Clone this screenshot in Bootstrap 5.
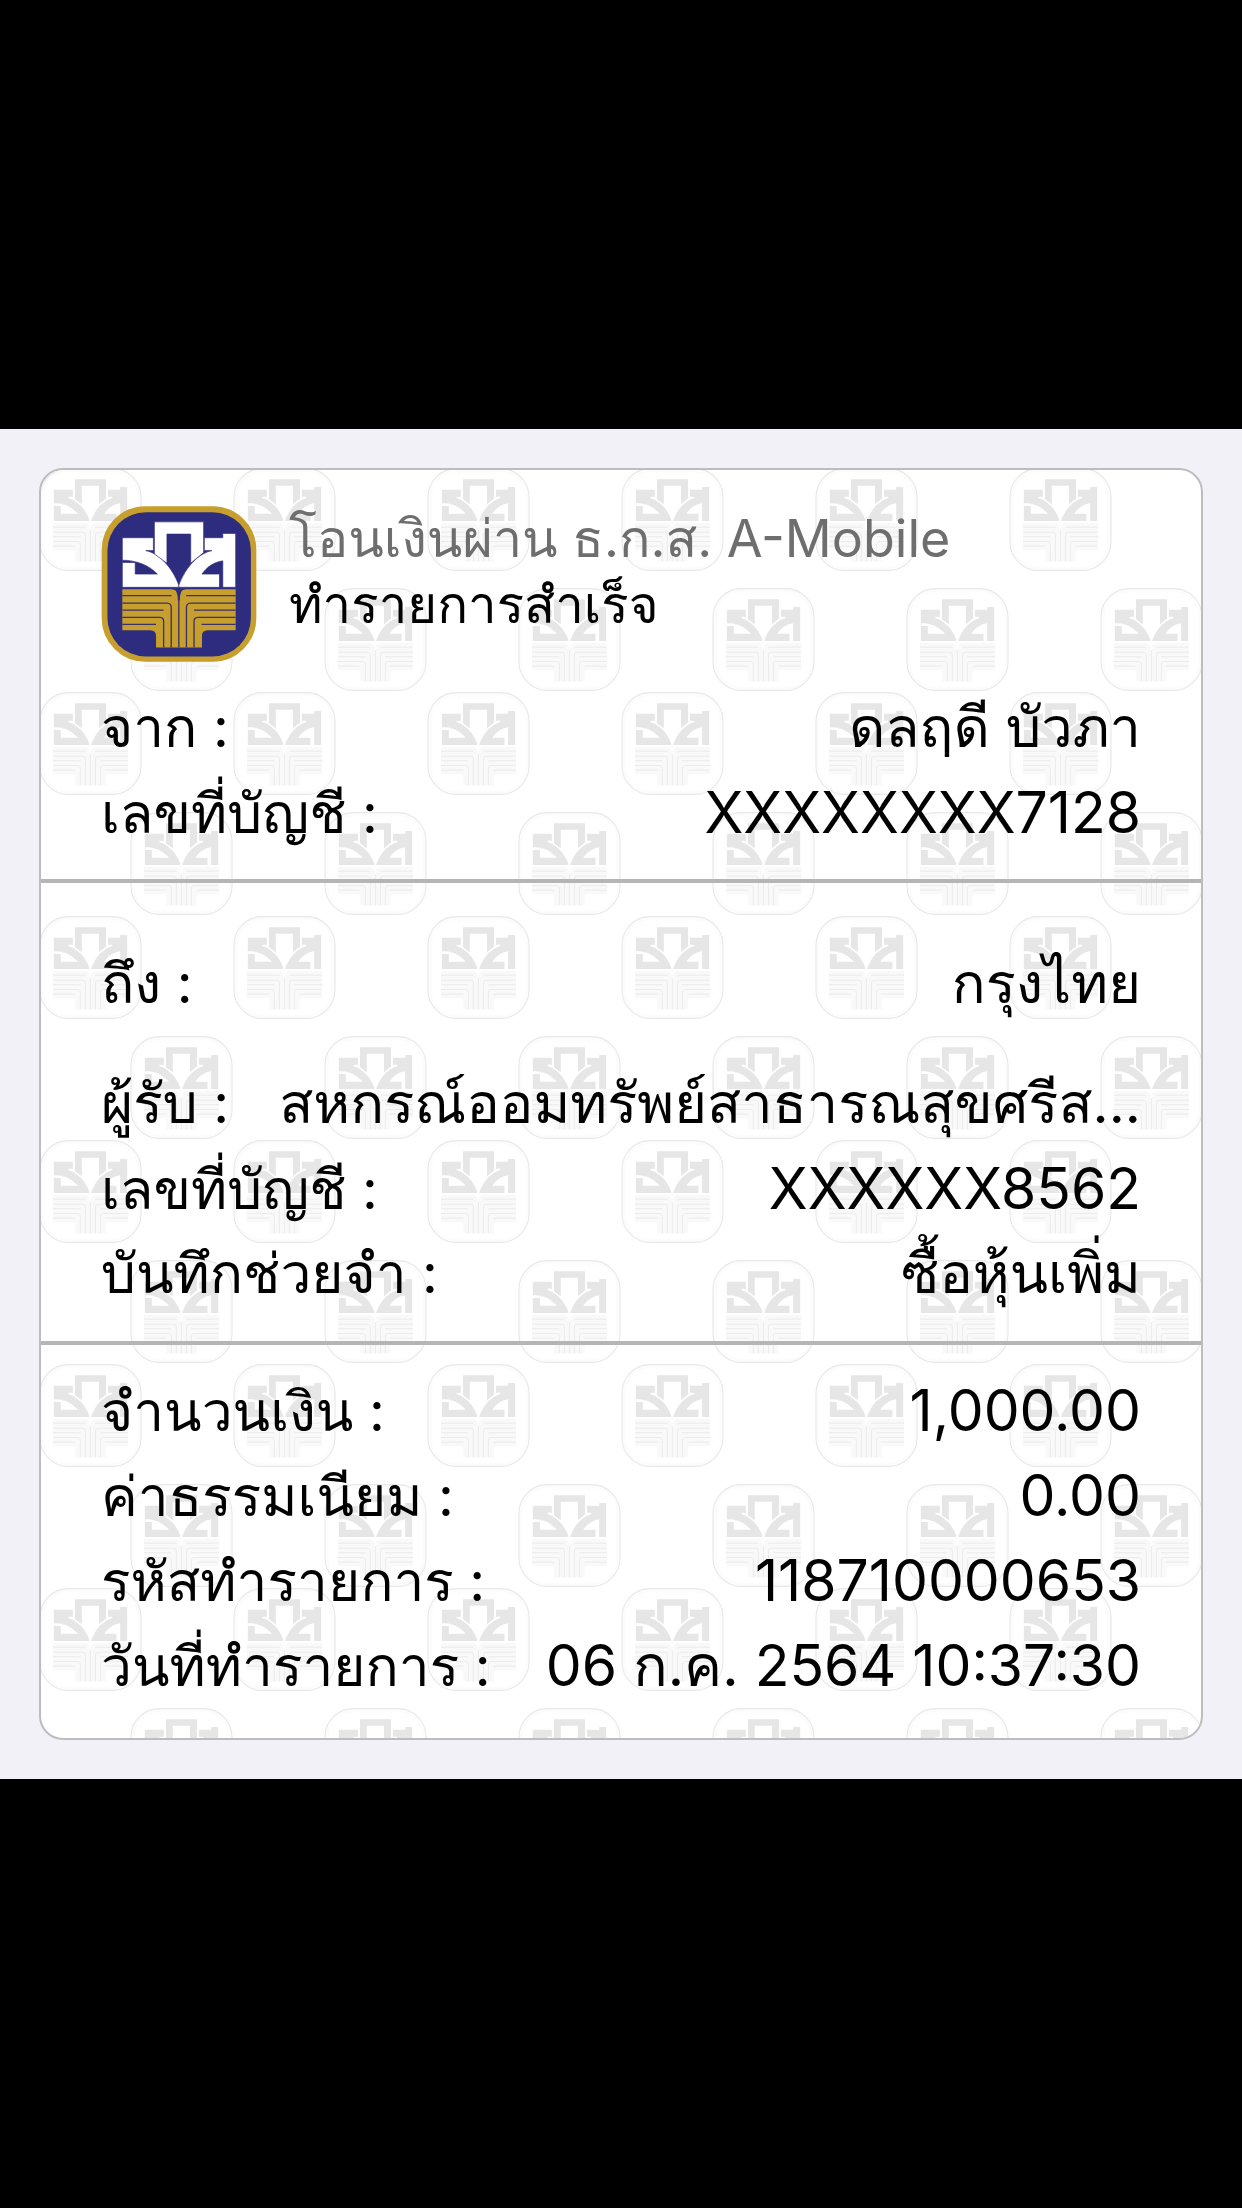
<!DOCTYPE html>
<html lang="th">
<head>
<meta charset="utf-8">
<meta name="viewport" content="width=device-width, initial-scale=1">
<title>โอนเงินผ่าน ธ.ก.ส. A-Mobile</title>
<link rel="stylesheet" href="https://cdn.jsdelivr.net/npm/bootstrap@5.3.0/dist/css/bootstrap.min.css">
<script src="https://cdn.jsdelivr.net/npm/bootstrap@5.3.0/dist/js/bootstrap.bundle.min.js"></script>
<style>
  body { background: #000; color: #000; font-family: Inter, Loma, sans-serif; }
  .slip-band { background: #f2f1f8; padding: 39px; }
  .slip { border: 2px solid #bdbdc0; border-radius: 24px; background: #fff; color: #000; }
  .slip-watermark {
    --field: #fff; --glyph: #e6e6e6; --bars: #f9f9f9; --lines: #e9e9e9; --ring: #fcfcfc; --edge: #e8e8e8; --gap: 7px;
  }
  .slip-logo {
    --field: #2e2c7e; --glyph: #fff; --bars: #c79f2e; --lines: #3b3163; --ring: #c79f2e; --edge: #c79f2e; --gap: 2px;
    width: 156px; height: 156px;
  }
  .slip-head { padding: 36px 60px 23px; gap: 32px; }
  .slip-title { font-size: 52px; line-height: 66px; color: #6e6e6e; }
  .slip-status { font-size: 51px; line-height: 66px; }
  .slip-part { padding: 0 60px 24px; }
  .slip-part + .slip-part { border-top: 4px solid #b5b5b5; }
  .slip-to { padding-top: 58px; padding-bottom: 25px; }
  .slip-sum { padding-top: 23px; padding-bottom: 30px; }
  .slip-row { height: 85px; line-height: 85px; gap: 40px; }
  .slip-row dt { font-size: 55px; font-weight: 400; }
  .slip-row dd { font-size: 57px; }
  .slip-row .thai-value { font-size: 56px; }
  .slip-bank { margin-bottom: 35px; }
</style>
</head>
<body class="d-flex flex-column justify-content-center min-vh-100">
<svg class="d-none" aria-hidden="true">
  <symbol id="baac" viewBox="31 45 469 472">
    <rect x="34" y="48" width="463" height="466" rx="130" style="fill:var(--ring);stroke:var(--edge)" stroke-width="5"/>
    <rect x="49" y="64" width="434" height="436" rx="116" style="fill:var(--field)"/>
    <g style="fill:var(--glyph);stroke:var(--field);stroke-width:var(--gap)">
      <path d="M94 141H188V180H165C205 188 245 230 265 285V291H94V216H133V251H200C175 224 135 209 94 209Z"/>
      <path d="M342 141H398V128H437V291H398V211C370 215 350 230 335 251H388V291H265V285C285 230 325 188 365 180H342Z"/>
      <path d="M191 93H340V186L301 218V130H229V218L191 190Z"/>
    </g>
    <path style="fill:var(--bars)" d="M94 297H243Q259 298 265 311Q271 298 287 297H437V421H352Q335 422 335 438V473H196V438Q196 422 179 421H94Z"/>
    <g fill="none" stroke-width="4" style="stroke:var(--lines)">
      <path d="M94 316H243M94 339H230Q242 340 242 352V473M94 360H219M94 382H208Q219 383 219 394V473M94 403H196"/>
      <path d="M437 316H287M437 339H300Q288 340 288 352V473M437 360H311M437 382H322Q311 383 311 394V473M437 403H334"/>
      <path d="M265 306V473"/>
    </g>
    <path style="fill:var(--field)" d="M249 297Q262 300 262 330H268Q268 300 281 297Z"/>
  </symbol>
</svg>

<main class="slip-band">
  <article class="slip position-relative overflow-hidden">
    <svg class="slip-watermark position-absolute top-0 start-0 w-100 h-100" aria-hidden="true">
      <defs>
        <pattern id="marks" patternUnits="userSpaceOnUse" x="-2" y="-2" width="194" height="224">
          <use href="#baac" x="0" y="0" width="103" height="103"/>
          <use href="#baac" x="91" y="120" width="103" height="103"/>
        </pattern>
      </defs>
      <rect width="100%" height="100%" fill="url(#marks)"/>
    </svg>
    <div class="position-relative">
      <header class="slip-head d-flex">
        <svg class="slip-logo flex-shrink-0" role="img" aria-label="ธ.ก.ส."><use href="#baac" width="156" height="156"/></svg>
        <div>
          <h1 class="slip-title fw-normal mb-0">โอนเงินผ่าน ธ.ก.ส. A-Mobile</h1>
          <p class="slip-status mb-0">ทำรายการสำเร็จ</p>
        </div>
      </header>

      <dl class="slip-part mb-0">
        <div class="slip-row d-flex justify-content-between align-items-baseline"><dt>จาก :</dt><dd class="thai-value mb-0">ดลฤดี บัวภา</dd></div>
        <div class="slip-row d-flex justify-content-between align-items-baseline"><dt>เลขที่บัญชี :</dt><dd class="mb-0">XXXXXXXX7128</dd></div>
      </dl>

      <dl class="slip-part slip-to mb-0">
        <div class="slip-row slip-bank d-flex justify-content-between align-items-baseline"><dt>ถึง :</dt><dd class="thai-value mb-0">กรุงไทย</dd></div>
        <div class="slip-row d-flex justify-content-between align-items-baseline"><dt class="text-nowrap">ผู้รับ :</dt><dd class="thai-value text-nowrap mb-0">สหกรณ์ออมทรัพย์สาธารณสุขศรีส...</dd></div>
        <div class="slip-row d-flex justify-content-between align-items-baseline"><dt>เลขที่บัญชี :</dt><dd class="mb-0">XXXXXX8562</dd></div>
        <div class="slip-row d-flex justify-content-between align-items-baseline"><dt>บันทึกช่วยจำ :</dt><dd class="thai-value mb-0">ซื้อหุ้นเพิ่ม</dd></div>
      </dl>

      <dl class="slip-part slip-sum mb-0">
        <div class="slip-row d-flex justify-content-between align-items-baseline"><dt>จำนวนเงิน :</dt><dd class="mb-0">1,000.00</dd></div>
        <div class="slip-row d-flex justify-content-between align-items-baseline"><dt>ค่าธรรมเนียม :</dt><dd class="mb-0">0.00</dd></div>
        <div class="slip-row d-flex justify-content-between align-items-baseline"><dt>รหัสทำรายการ :</dt><dd class="mb-0">118710000653</dd></div>
        <div class="slip-row d-flex justify-content-between align-items-baseline"><dt>วันที่ทำรายการ :</dt><dd class="mb-0">06 ก.ค. 2564 10:37:30</dd></div>
      </dl>
    </div>
  </article>
</main>
</body>
</html>
